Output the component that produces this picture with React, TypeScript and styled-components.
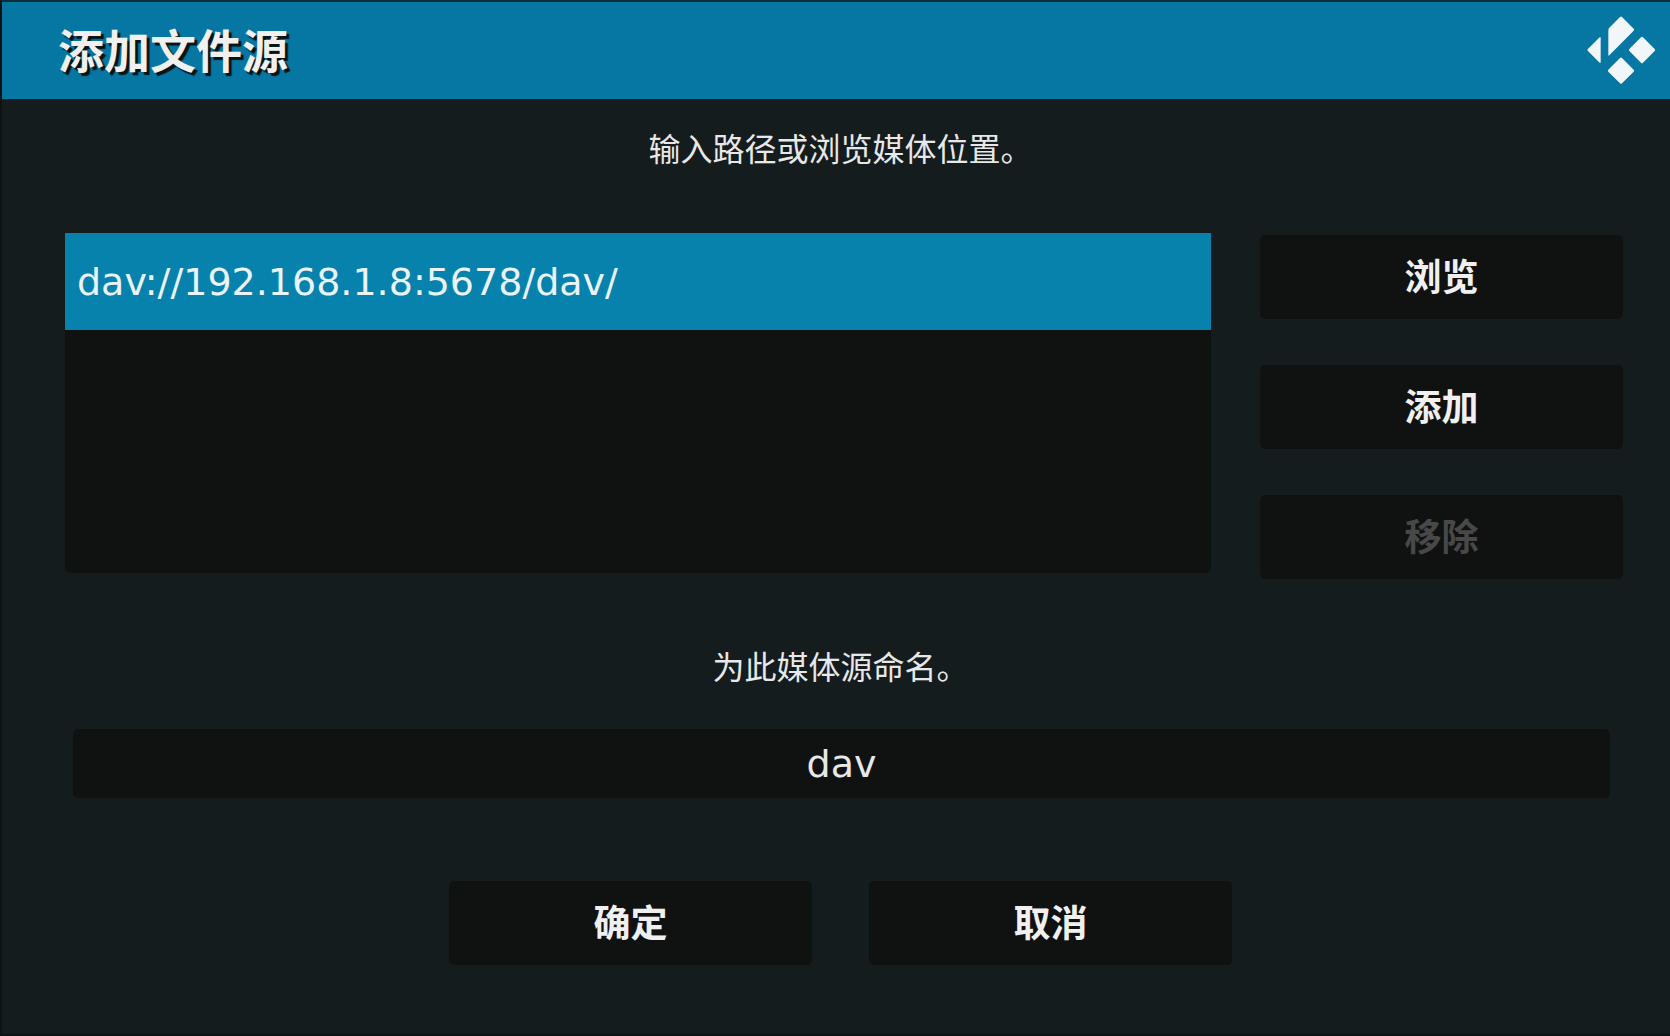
import { useState } from "react";
import styled, { createGlobalStyle, css } from "styled-components";

const GlobalStyle = createGlobalStyle`
  * {
    box-sizing: border-box;
  }
  body {
    margin: 0;
    background: #151c1e;
    font-family: "DejaVu Sans", "Noto Sans CJK SC", sans-serif;
    color: #e8e8e8;
  }
`;

const Dialog = styled.form`
  min-height: 100vh;
  display: flex;
  flex-direction: column;
  border: 2px solid #0b1314;
  border-top-color: #06303c;
  border-right: 0;
`;

const Header = styled.header`
  display: flex;
  align-items: center;
  justify-content: space-between;
  height: 97px;
  padding: 0 14px 0 56px;
  background: #0676a3;
`;

const Title = styled.h1`
  margin: 0;
  padding-bottom: 6px;
  font-family: "Noto Sans CJK SC", sans-serif;
  font-size: 46px;
  line-height: 64px;
  font-weight: 700;
  color: #f0f0f0;
  text-shadow: 3px 3px 1px #0a1416;
`;

const Logo = styled.svg`
  width: 69px;
  height: 69px;
  fill: #f1f6f9;
`;

const captionText = css`
  margin: 0;
  padding: 0 62px 0 71px;
  font-family: "Noto Sans CJK SC", sans-serif;
  font-size: 32px;
  line-height: 48px;
  text-align: center;
`;

const Caption = styled.p`
  ${captionText}
`;

const NameLabel = styled.label`
  ${captionText}
`;

const Section = styled.section<{ $top: number; $gap: number }>`
  display: flex;
  flex-direction: column;
  gap: ${(p) => p.$gap}px;
  padding-top: ${(p) => p.$top}px;
`;

const Sources = styled.div`
  display: grid;
  grid-template-columns: 1fr 363px;
  gap: 49px;
  padding: 0 47px 0 63px;
`;

const PathList = styled.ul`
  margin: 0 0 6px;
  padding: 0;
  list-style: none;
  background: #101211;
  border-radius: 0 0 5px 5px;
`;

const PathRow = styled.button`
  display: block;
  width: 100%;
  height: 97px;
  padding: 0 12px;
  border: 0;
  background: #0682ad;
  color: #eaf4f7;
  font: inherit;
  font-size: 38px;
  line-height: 48px;
  text-align: left;
`;

const Actions = styled.div`
  display: flex;
  flex-direction: column;
  gap: 46px;
  padding-top: 2px;
`;

const Button = styled.button`
  width: 363px;
  height: 84px;
  padding: 0 0 4px;
  border: 0;
  border-radius: 5px;
  background: #101211;
  color: #f0f0f0;
  font-family: "Noto Sans CJK SC", sans-serif;
  font-size: 37px;
  line-height: 48px;
  font-weight: 700;

  &:disabled {
    color: #484848;
  }
`;

const NameRow = styled.div`
  display: flex;
  padding: 0 60px 0 71px;
`;

const NameInput = styled.input`
  flex: 1;
  min-width: 0;
  height: 69px;
  padding: 0;
  border: 0;
  border-radius: 5px;
  background: #101211;
  color: #e8e8e8;
  font: inherit;
  font-size: 38px;
  text-align: center;
  outline: 0;
`;

const Footer = styled.footer`
  display: flex;
  justify-content: center;
  gap: 57px;
  padding: 83px 62px 64px 71px;
`;

export default function App() {
  const [name, setName] = useState("dav");

  return (
    <>
      <GlobalStyle />
      <Dialog onSubmit={(e) => e.preventDefault()}>
        <Header>
          <Title>添加文件源</Title>
          <Logo viewBox="0 0 207 207" role="img" aria-label="Kodi">
            <path d="M2 104 Q0 102 2 100 L38 64 Q41 62 41 66 V138 Q41 142 38 140Z" />
            <path d="M64 42 Q64 38 67 35 L99 3 Q102 0 105 3 L140 38 Q143 41 140 44 L67 118 Q64 121 64 116Z" />
            <path d="M162 64 Q165 61 168 64 L203 99 Q206 102 203 105 L168 140 Q165 143 162 140 L127 105 Q124 102 127 99Z" />
            <path d="M99 126 Q102 123 105 126 L140 161 Q143 164 140 167 L105 202 Q102 205 99 202 L64 167 Q61 164 64 161Z" />
          </Logo>
        </Header>

        <Section $top={24} $gap={62}>
          <Caption>输入路径或浏览媒体位置。</Caption>
          <Sources>
            <PathList>
              <li>
                <PathRow type="button">dav://192.168.1.8:5678/dav/</PathRow>
              </li>
            </PathList>
            <Actions>
              <Button type="button">浏览</Button>
              <Button type="button">添加</Button>
              <Button type="button" disabled>
                移除
              </Button>
            </Actions>
          </Sources>
        </Section>

        <Section $top={62} $gap={40}>
          <NameLabel htmlFor="source-name">为此媒体源命名。</NameLabel>
          <NameRow>
            <NameInput
              id="source-name"
              value={name}
              onChange={(e) => setName(e.target.value)}
            />
          </NameRow>
        </Section>

        <Footer>
          <Button type="submit">确定</Button>
          <Button type="button">取消</Button>
        </Footer>
      </Dialog>
    </>
  );
}
